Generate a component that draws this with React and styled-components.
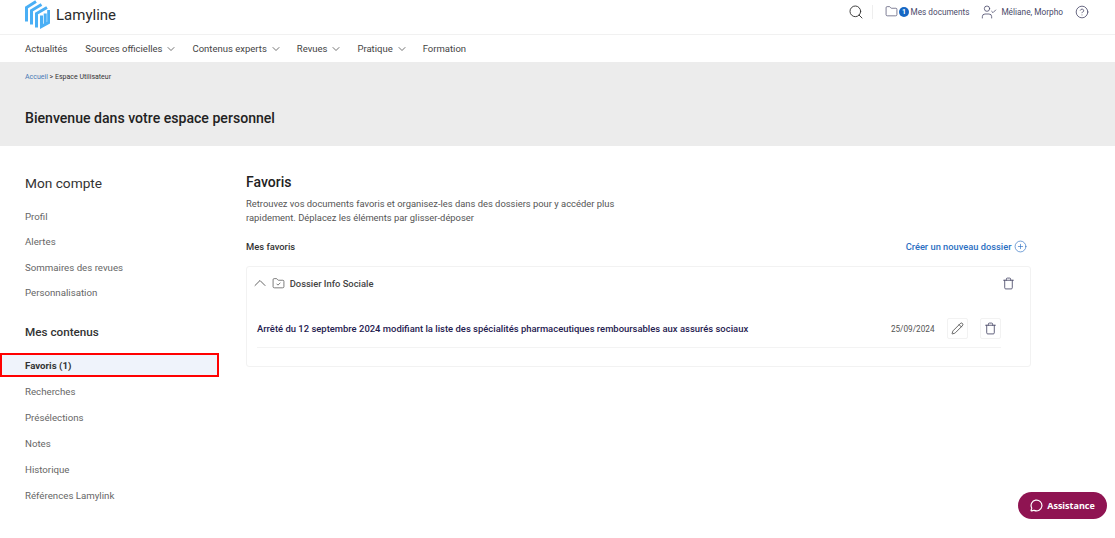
import React from "react";
import styled, { createGlobalStyle } from "styled-components";
import { ChevronDown, ChevronUp, Search, Folder, FolderCheck, CircleHelp, UserCheck, Trash, Pencil, CirclePlus, MessageCircle } from "lucide-react";

const GlobalStyle = createGlobalStyle`
  html, body {
    margin: 0;
    padding: 0;
    background: #fff;
    font-family: Roboto, "Liberation Sans", sans-serif;
    color: #333;
  }
  * { box-sizing: border-box; }
`;

const Logo = () => (
  <svg width="25" height="29" viewBox="0 0 25 29" fill="none" stroke="#4aaff5" strokeWidth="3">
    <path d="M1.5 21.5 V7.5 L11 1.5" />
    <path d="M6.5 24.5 V10.5 L16.5 4.5" />
    <path d="M11.5 27.5 V13.5 L22 7.5" />
    <path d="M16.5 15.5 V26.5 L23.7 22.5 V10" />
    <path d="M20.2 13.5 V24" />
  </svg>
);

const navItems = [
  { label: "Actualités" },
  { label: "Sources officielles", menu: true },
  { label: "Contenus experts", menu: true },
  { label: "Revues", menu: true },
  { label: "Pratique", menu: true },
  { label: "Formation" },
];

const compte = ["Profil", "Alertes", "Sommaires des revues", "Personnalisation"];
const contenus = ["Recherches", "Présélections", "Notes", "Historique", "Références Lamylink"];

export default function App() {
  return (
    <Page>
      <GlobalStyle />
      <TopBar>
        <Brand>
          <Logo />
          <BrandName>Lamyline</BrandName>
        </Brand>
        <Tools>
          <Search size={16} color="#333" strokeWidth={1.4} />
          <ToolDivider />
          <DocLink>
            <Folder size={13} color="#4a4a6a" strokeWidth={1.3} />
            <Badge>1</Badge>
            <span>Mes documents</span>
          </DocLink>
          <UserLink>
            <UserCheck size={16} color="#4a4a6a" strokeWidth={1.2} />
            <span>Méliane, Morpho</span>
          </UserLink>
          <CircleHelp size={14} color="#4a4a6a" strokeWidth={1.4} />
        </Tools>
      </TopBar>

      <Nav>
        {navItems.map((item) => (
          <NavItem key={item.label}>
            {item.label}
            {item.menu && <MenuChevron size={12} strokeWidth={1.5} />}
          </NavItem>
        ))}
      </Nav>

      <Banner>
        <Crumbs>
          <a>Accueil</a> &gt; Espace Utilisateur
        </Crumbs>
        <BannerTitle>Bienvenue dans votre espace personnel</BannerTitle>
      </Banner>

      <Main>
        <Sidebar>
          <AccountTitle>Mon compte</AccountTitle>
          <AccountList>
            {compte.map((label) => (
              <SideLink key={label}>{label}</SideLink>
            ))}
          </AccountList>
          <ContentTitle>Mes contenus</ContentTitle>
          <ContentList>
            <ActiveLink>Favoris (1)</ActiveLink>
            {contenus.map((label) => (
              <ContentLink key={label}>{label}</ContentLink>
            ))}
          </ContentList>
        </Sidebar>

        <Content>
          <Heading>Favoris</Heading>
          <Intro>
            Retrouvez vos documents favoris et organisez-les dans des dossiers pour y accéder plus
            rapidement. Déplacez les éléments par glisser-déposer
          </Intro>
          <FavHead>
            <FavTitle>Mes favoris</FavTitle>
            <NewFolder>
              Créer un nouveau dossier
              <CirclePlus size={13} strokeWidth={1.2} />
            </NewFolder>
          </FavHead>
          <FolderCard>
            <FolderHead>
              <Collapse size={20} strokeWidth={1.1} />
              <FolderCheck size={13} color="#555" strokeWidth={1.4} />
              <FolderName>Dossier Info Sociale</FolderName>
              <HeadTrash>
                <Trash size={13} color="#4a4a6a" strokeWidth={1.6} />
              </HeadTrash>
            </FolderHead>
            <DocRow>
              <DocTitle>Arrêté du 12 septembre 2024 modifiant la liste des spécialités pharmaceutiques remboursables aux assurés sociaux</DocTitle>
              <DocDate>25/09/2024</DocDate>
              <IconButton>
                <Pencil size={13} color="#444" strokeWidth={1.5} />
              </IconButton>
              <IconButton>
                <Trash size={13} color="#4a4a6a" strokeWidth={1.6} />
              </IconButton>
            </DocRow>
          </FolderCard>
        </Content>
      </Main>

      <Assistance>
        <MessageCircle size={13} strokeWidth={2.2} />
        Assistance
      </Assistance>
    </Page>
  );
}

const Page = styled.div`
  min-height: 538px;
  overflow: hidden;
`;

const TopBar = styled.header`
  height: 35px;
  display: flex;
  justify-content: space-between;
  align-items: flex-start;
  padding: 0 26px 0 25px;
  border-bottom: 1px solid #f1f1f1;
`;

const Brand = styled.div`
  display: flex;
  align-items: center;
  gap: 6px;
  height: 29px;
`;

const BrandName = styled.span`
  font-size: 15px;
  color: #2b2b2b;
`;

const Tools = styled.div`
  display: flex;
  align-items: center;
  height: 23px;
`;

const ToolDivider = styled.span`
  width: 1px;
  height: 14px;
  background: #eee;
  margin: 0 12px 0 8px;
`;

const DocLink = styled.div`
  display: flex;
  align-items: center;
  gap: 1.5px;
  font-size: 8.2px;
  color: #4a4a6a;
`;

const Badge = styled.span`
  width: 10px;
  height: 10px;
  border-radius: 50%;
  background: #1667c4;
  color: #fff;
  font-size: 7px;
  font-weight: 700;
  display: flex;
  align-items: center;
  justify-content: center;
`;

const UserLink = styled.div`
  display: flex;
  align-items: center;
  gap: 4.5px;
  font-size: 8.3px;
  color: #4a4a6a;
  margin: 0 12px 0 11.5px;
`;

const Nav = styled.nav`
  height: 27px;
  display: flex;
  align-items: center;
  gap: 18px;
  padding: 0 25px;
`;

const NavItem = styled.span`
  display: flex;
  align-items: center;
  gap: 3px;
  font-size: 9.5px;
  color: #444;
`;

const MenuChevron = styled(ChevronDown)`
  color: #444;
  margin-right: -3px;
`;

const Banner = styled.section`
  height: 84px;
  background: #ececec;
  padding: 11px 25px 0;
`;

const Crumbs = styled.div`
  font-size: 7px;
  color: #333;
  a { color: #4a78b5; }
`;

const BannerTitle = styled.h1`
  margin: 29px 0 0;
  font-size: 14.1px;
  font-weight: 500;
  color: #222;
`;

const Main = styled.main`
  display: flex;
`;

const Sidebar = styled.aside`
  width: 219px;
  flex: none;
  padding-top: 29px;
`;

const AccountTitle = styled.h2`
  margin: 0 0 0 25px;
  font-size: 13.7px;
  font-weight: 400;
  color: #333;
`;

const AccountList = styled.div`
  display: flex;
  flex-direction: column;
  gap: 11.3px;
  margin-top: 19px;
`;

const SideLink = styled.a`
  padding-left: 25px;
  height: 14px;
  line-height: 14px;
  font-size: 9.7px;
  color: #666;
`;

const ContentTitle = styled.h3`
  margin: 25px 0 0 25px;
  font-size: 11.7px;
  font-weight: 500;
  color: #333;
`;

const ContentList = styled.div`
  display: flex;
  flex-direction: column;
  margin-top: 14px;
`;

const ActiveLink = styled.a`
  height: 24px;
  line-height: 21px;
  padding-left: 23px;
  font-size: 9.7px;
  font-weight: 700;
  color: #333;
  background: #eff3fb;
  border: 2px solid #f00;
`;

const ContentLink = styled(SideLink)`
  height: 26px;
  line-height: 29px;
`;

const Content = styled.div`
  width: 784.5px;
  margin-left: 27px;
  padding-top: 28px;
`;

const Heading = styled.h2`
  margin: 0;
  font-size: 14px;
  font-weight: 500;
  color: #222;
`;

const Intro = styled.p`
  margin: 7px 0 0;
  width: 385px;
  font-size: 9.4px;
  line-height: 14px;
  color: #555;
`;

const FavHead = styled.div`
  display: flex;
  justify-content: space-between;
  align-items: center;
  margin-top: 14px;
  height: 14px;
  padding-right: 4px;
`;

const FavTitle = styled.span`
  font-size: 9.4px;
  font-weight: 500;
  color: #333;
`;

const NewFolder = styled.a`
  display: flex;
  align-items: center;
  gap: 2px;
  font-size: 9.3px;
  font-weight: 500;
  color: #2b6fc2;
`;

const FolderCard = styled.div`
  margin-top: 13px;
  height: 101px;
  border: 1px solid #f2f2f2;
  border-radius: 3px;
  padding: 0 10px;
`;

const FolderHead = styled.div`
  height: 32px;
  display: flex;
  align-items: center;
  gap: 6px;
  margin-left: -7px;
`;

const Collapse = styled(ChevronUp)`
  color: #555;
  margin-right: -4.3px;
`;

const FolderName = styled.span`
  font-size: 9.4px;
  font-weight: 500;
  color: #444;
  margin-left: -1px;
`;

const HeadTrash = styled.span`
  display: flex;
  margin-left: auto;
  margin-right: 5px;
`;

const DocRow = styled.div`
  display: flex;
  align-items: center;
  height: 49px;
  margin-right: 19px;
  padding-top: 11px;
  border-bottom: 1px solid #f3f3f3;
`;

const DocTitle = styled.span`
  flex: 1;
  font-size: 9.45px;
  font-weight: 500;
  color: #1f2150;
  white-space: nowrap;
`;

const DocDate = styled.span`
  font-size: 8.2px;
  color: #555;
  margin-right: 12px;
`;

const IconButton = styled.span`
  width: 21px;
  height: 21px;
  display: flex;
  align-items: center;
  justify-content: center;
  border: 1px solid #f2f2f2;
  border-radius: 2px;
  & + & { margin-left: 12px; }
`;

const Assistance = styled.button`
  position: fixed;
  left: 1018px;
  top: 492px;
  width: 89px;
  height: 27px;
  border: 0;
  border-radius: 14px;
  background: #8f1452;
  color: #fff;
  display: flex;
  align-items: center;
  justify-content: center;
  gap: 4px;
  font-family: "Open Sans", sans-serif;
  font-size: 9px;
  font-weight: 700;
`;
